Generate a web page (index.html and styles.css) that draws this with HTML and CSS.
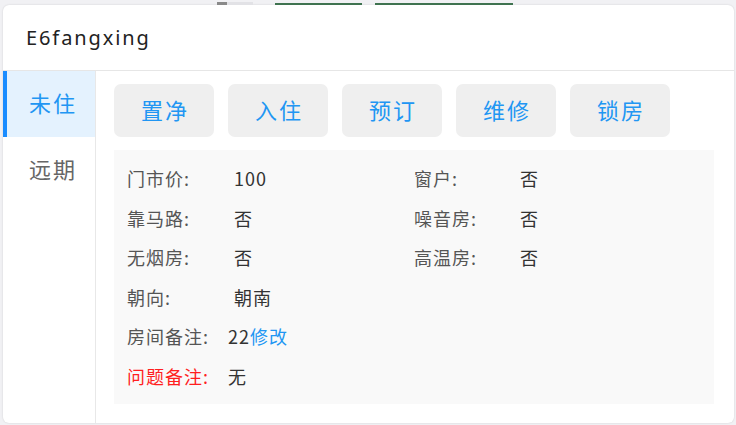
FILE: index.html
```html
<!DOCTYPE html>
<html lang="zh-CN">
<head>
    <meta charset="UTF-8">
    <meta name="viewport" content="width=device-width, initial-scale=1.0">
    <title>E6fangxing</title>
    <link rel="stylesheet" href="styles.css">
</head>
<body>
    <div class="backdrop">
        <span class="bg-chip"></span>
        <span class="bg-line"></span>
        <span class="bg-line wide"></span>
    </div>

    <div class="dialog">
        <div class="dialog-header">E6fangxing</div>
        <div class="dialog-body">
            <ul class="tabs">
                <li class="tab active">未住</li>
                <li class="tab">远期</li>
            </ul>
            <div class="content">
                <div class="actions">
                    <button>置净</button>
                    <button>入住</button>
                    <button>预订</button>
                    <button>维修</button>
                    <button>锁房</button>
                </div>
                <div class="info">
                    <div class="info-grid">
                        <span class="label">门市价:</span><span class="value">100</span>
                        <span class="label">窗户:</span><span class="value">否</span>
                        <span class="label">靠马路:</span><span class="value">否</span>
                        <span class="label">噪音房:</span><span class="value">否</span>
                        <span class="label">无烟房:</span><span class="value">否</span>
                        <span class="label">高温房:</span><span class="value">否</span>
                        <span class="label">朝向:</span><span class="value">朝南</span>
                    </div>
                    <div class="info-row">
                        <span class="label">房间备注:</span><span class="value">22<a href="#" class="edit">修改</a></span>
                    </div>
                    <div class="info-row">
                        <span class="label danger">问题备注:</span><span class="value">无</span>
                    </div>
                </div>
            </div>
        </div>
    </div>
</body>
</html>
```

FILE: styles.css
```css
body {
  margin: 0;
  padding: 0;
  background: #f1f1f4;
  font-family: "Noto Sans", "Noto Sans CJK SC", sans-serif;
  color: #333;
  height: 425px;
  overflow: hidden;
}
.backdrop {
  height: 5px;
  display: flex;
  align-items: flex-start;
  padding-left: 217px;
}
.bg-chip {
  margin-top: 2px;
  width: 36px;
  height: 3px;
  background: linear-gradient(to right, #8a8a8a 10px, #e2e2e6 10px);
}
.bg-line {
  margin: 3px 0 0 22px;
  width: 87px;
  height: 2px;
  background: #3f7350;
}
.bg-line.wide {
  margin-left: 13px;
  width: 138px;
}
.dialog {
  margin: 0 2px 0 3px;
  height: 418px;
  background: #fff;
  border-radius: 6px;
  box-shadow: 0 0 2px rgba(0,0,0,0.15);
  display: flex;
  flex-direction: column;
  overflow: hidden;
}
.dialog-header {
  height: 65px;
  line-height: 66px;
  padding-left: 23px;
  font-size: 20px;
  letter-spacing: 1.9px;
  color: #222;
  border-bottom: 1px solid #e6e6e6;
  flex-shrink: 0;
}
.dialog-body {
  flex: 1;
  display: flex;
}
.tabs {
  list-style: none;
  margin: 0;
  padding: 0;
  width: 92px;
  border-right: 1px solid #e8e8e8;
  flex-shrink: 0;
}
.tab {
  height: 66px;
  line-height: 62px;
  padding-left: 22px;
  font-family: "Noto Sans CJK SC", sans-serif;
  font-size: 22px;
  letter-spacing: 2px;
  color: #666;
  border-left: 4px solid transparent;
}
.tab.active {
  background: #e4f2fe;
  color: #2196f3;
  border-left-color: #1a8cff;
}
.content {
  flex: 1;
  padding: 13px 18px 0 18px;
}
.actions {
  display: flex;
  gap: 14px;
}
.actions button {
  width: 100px;
  height: 53px;
  border: none;
  border-radius: 7px;
  background: #efefef;
  color: #2196f3;
  font-family: "Noto Sans CJK SC", sans-serif;
  font-size: 22px;
  letter-spacing: 2px;
  padding: 0 0 4px 2px;
  cursor: pointer;
}
.info {
  margin-top: 13px;
  width: 600px;
  height: 254px;
  background: #f9f9f9;
  padding-top: 9px;
  box-sizing: border-box;
  font-family: "Noto Sans CJK SC", sans-serif;
  font-size: 18px;
  letter-spacing: 1px;
}
.info-grid {
  display: grid;
  grid-template-columns: 107px 180px 106px auto;
  padding-left: 13px;
}
.info-grid span,
.info-row span {
  line-height: 39.6px;
}
.info-row {
  display: flex;
  padding-left: 13px;
}
.info-row .label {
  margin-right: 19px;
}
.label {
  color: #555;
}
.value {
  color: #333;
}
.danger {
  color: #ff1f1f;
}
.edit {
  color: #2196f3;
  text-decoration: none;
}
```
